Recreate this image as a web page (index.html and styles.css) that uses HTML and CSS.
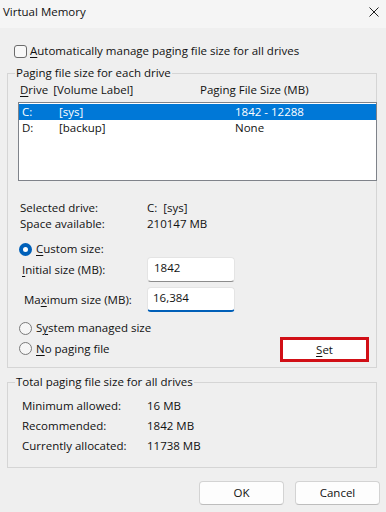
FILE: index.html
```html
<!DOCTYPE html>
<html lang="en">
<head>
<meta charset="utf-8">
<title>Virtual Memory</title>
<link rel="stylesheet" href="styles.css">
</head>
<body>
<div class="window">
  <div class="titlebar">
    <span class="title">Virtual Memory</span>
    <svg class="close" viewBox="0 0 10 10" width="10" height="10" aria-hidden="true">
      <path d="M0.5 0.5 L9.5 9.5 M9.5 0.5 L0.5 9.5" stroke="#1f1f1f" stroke-width="1" fill="none"/>
    </svg>
  </div>
  <div class="content">
    <div class="check-row">
      <span class="checkbox"></span>
      <span><u>A</u>utomatically manage paging file size for all drives</span>
    </div>

    <fieldset class="group group-drives">
      <legend>Paging file size for each drive</legend>
      <div class="list-head">
        <span class="col-drive"><u>D</u>rive<span class="vol">[Volume Label]</span></span>
        <span class="col-size">Paging File Size (MB)</span>
      </div>
      <div class="listbox">
        <div class="row selected"><span class="c1">C:</span><span class="c2">[sys]</span><span class="c3">1842 - 12288</span></div>
        <div class="row"><span class="c1">D:</span><span class="c2">[backup]</span><span class="c3">None</span></div>
      </div>

      <div class="info">
        <div class="kv"><span class="k">Selected drive:</span><span>C:&nbsp;&nbsp;[sys]</span></div>
        <div class="kv"><span class="k">Space available:</span><span>210147 MB</span></div>
      </div>

      <div class="radio-row first-radio">
        <span class="radio checked"></span>
        <span><u>C</u>ustom size:</span>
      </div>
      <div class="field-row">
        <span class="field-label"><u>I</u>nitial size (MB):</span>
        <div class="textbox">1842</div>
      </div>
      <div class="field-row second-field">
        <span class="field-label shifted">Ma<u>x</u>imum size (MB):</span>
        <div class="textbox focused">16,384</div>
      </div>
      <div class="radio-row sys-radio">
        <span class="radio"></span>
        <span>S<u>y</u>stem managed size</span>
      </div>
      <div class="last-row">
        <div class="radio-row">
          <span class="radio"></span>
          <span><u>N</u>o paging file</span>
        </div>
        <button class="btn set-btn" type="button"><u>S</u>et</button>
      </div>
    </fieldset>

    <fieldset class="group group-total">
      <legend>Total paging file size for all drives</legend>
      <div class="totals">
        <div class="kv tall"><span class="k">Minimum allowed:</span><span>16 MB</span></div>
        <div class="kv tall"><span class="k">Recommended:</span><span>1842 MB</span></div>
        <div class="kv tall"><span class="k">Currently allocated:</span><span>11738 MB</span></div>
      </div>
    </fieldset>

    <div class="buttons">
      <button class="btn" type="button">OK</button>
      <button class="btn" type="button">Cancel</button>
    </div>
  </div>
</div>
</body>
</html>
```

FILE: styles.css
```css
* { box-sizing: border-box; }
html, body { margin: 0; padding: 0; }
body {
  width: 386px;
  height: 512px;
  overflow: hidden;
  background: #efefef;
  font-family: "Open Sans", "Noto Sans", "Liberation Sans", sans-serif;
  font-size: 11.5px;
  line-height: 16px;
  color: #111;
}
u { text-decoration-thickness: 1px; text-underline-offset: 2px; }

.titlebar {
  height: 28px;
  background: #f5f5f5;
  display: flex;
  align-items: center;
  justify-content: space-between;
  padding: 0 7px 4px 3px;
}
.title { font-size: 11.5px; }
.close { display: block; }

.content { padding: 0 9px 0 7px; }

.check-row {
  display: flex;
  align-items: center;
  height: 16px;
  margin-top: 15px;
  padding-left: 7px;
}
.checkbox {
  width: 13px;
  height: 13px;
  border: 1px solid #6b6b6b;
  border-radius: 3px;
  background: #f8f8f8;
  margin-right: 3px;
  flex: none;
}

.group {
  margin: 6px 0 0;
  padding: 1px 0 5px;
  border: 1px solid #d5d5d5;
  min-width: 0;
}
.group legend {
  margin-left: 7px;
  padding: 0 1px;
  line-height: 16px;
}

.list-head {
  display: flex;
  margin-left: 12px;
  height: 16px;
}
.col-drive { width: 180px; }
.vol { margin-left: 5px; }

.listbox {
  margin: 4px 0 0 10px;
  width: 359px;
  height: 79px;
  border: 1px solid #7f838a;
  background: #fff;
  padding: 1px 0;
}
.row {
  display: flex;
  height: 16px;
  padding-left: 3px;
}
.row.selected { background: #0078d7; color: #fff; }
.c1 { width: 37px; }
.c2 { width: 176px; }

.info { margin-top: 19px; }
.kv {
  display: flex;
  height: 16px;
  margin-left: 12px;
}
.kv .k { width: 127px; }

.radio-row {
  display: flex;
  align-items: center;
  height: 16px;
  margin-left: 11px;
}
.first-radio { margin-top: 9px; }
.sys-radio { margin-top: 8px; }
.radio {
  width: 13px;
  height: 13px;
  border-radius: 50%;
  border: 1px solid #7a7a7a;
  background: #f6f6f6;
  margin-right: 4px;
  flex: none;
}
.radio.checked {
  border: 4px solid #0060b9;
  background: #fff;
}

.field-row {
  display: grid;
  grid-template-columns: 139px 88px;
  align-items: center;
  height: 25px;
}
.second-field { margin-top: 5px; }
.field-label { padding-left: 14px; }
.field-label.shifted { padding-left: 16px; }
.textbox {
  height: 25px;
  background: #fff;
  border: 1px solid #e4e4e4;
  border-bottom-color: #8c8c8c;
  border-radius: 4px;
  padding: 2px 6px;
}
.textbox.focused {
  border-bottom: 2px solid #005fb8;
  padding-left: 5px;
}

.last-row {
  display: flex;
  align-items: center;
  justify-content: space-between;
  height: 25px;
  margin-top: 1px;
  padding-right: 7px;
}
.last-row .radio-row { margin-top: -2px; }

.btn {
  font: inherit;
  color: #111;
  width: 85px;
  height: 24px;
  padding: 0;
  background: #fdfdfd;
  border: 1px solid #d3d3d3;
  border-bottom-color: #bdbdbd;
  border-radius: 4px;
  text-align: center;
}
.set-btn {
  width: 89px;
  height: 25px;
  border: 3px solid #d10f16;
  border-radius: 0;
  background: #fff;
}

.group-total { padding: 6px 0 11px; }
.kv.tall {
  height: 20px;
  line-height: 20px;
  margin-left: 14px;
}
.kv.tall .k { width: 125px; }

.buttons {
  display: flex;
  justify-content: flex-end;
  gap: 11px;
  margin: 13px -3px 0 0;
}
```
